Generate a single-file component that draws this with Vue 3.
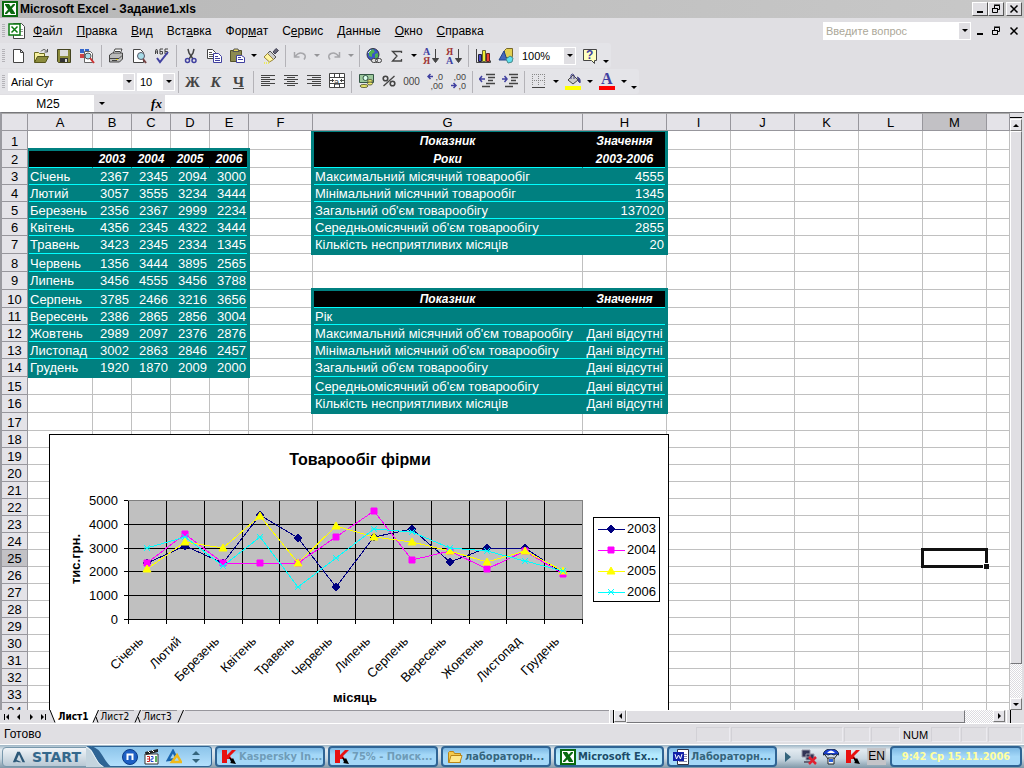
<script setup>
import { ref } from 'vue'

/* ---------- menu and toolbars ---------- */
const menu = [
  ['', 'Ф', 'айл'], ['', 'П', 'равка'], ['', 'В', 'ид'], ['Вст', 'а', 'вка'], ['Фор', 'м', 'ат'],
  ['С', 'е', 'рвис'], ['', 'Д', 'анные'], ['', 'О', 'кно'], ['', 'С', 'правка']
]

const icons = {
  new: '<path d="M3.500 1.500h7l3 3v10h-10zM10.500 1.500v3h3" fill="#fff" stroke="#444"/>',
  open: '<path d="M1.500 14V4.500h4l1 1h5v3" fill="#f6f0a0" stroke="#6b6b20"/><path d="M1.500 14.500l3-6h11l-3 6z" fill="#8c8c3c" stroke="#55551c"/><path d="M8 3.500q3-4 6 0M14.500 1v3h-3" fill="none" stroke="#555"/>',
  save: '<path d="M1.500 1.500h13v13h-12l-1-1z" fill="#8a8a3a" stroke="#444420"/><path d="M4 2h8v6H4z" fill="#ddd"/><path d="M4 10h8v4H4z" fill="#333"/><path d="M9 11h2v3H9z" fill="#ddd"/>',
  search: '<path d="M1 1h4v4H1zM6 1h4v3H6z" fill="#36c"/><path d="M1 6h4v4H1z" fill="#c44"/><path d="M5.500 3.500h6l2 2v9h-8z" fill="#fff" stroke="#666"/><circle cx="9" cy="8" r="3" fill="#a8dce8" stroke="#555"/><path d="M11 10l4 5" stroke="#c33" stroke-width="2"/>',
  print: '<path d="M5 6l2-5h7l-2 5" fill="#fff" stroke="#444"/><path d="M1.500 7l3-2h10v6l-3 3h-10z" fill="#bbb" stroke="#444"/><path d="M2 10.500h9l3-3M4 12.500h5M7 3.500h5" stroke="#444" fill="none"/><path d="M8 11h2v1H8z" fill="#e6d820"/>',
  preview: '<path d="M2.500 1.500h7l3 3v10h-10z" fill="#fff" stroke="#444"/><circle cx="10" cy="8" r="3.500" fill="#a8dce8" stroke="#556"/><path d="M12 11l3 4" stroke="#744" stroke-width="2"/>',
  spell: '<path d="M1.500 6V3l1-2 1 2v3M1.500 4h2M9 1H6v5h2.500V3.500H6M14 1h-3v5h2.500V3.500H11" fill="none" stroke="#444"/><path d="M3 10l3 4 8-10" fill="none" stroke="#4040a0" stroke-width="2"/>',
  cut: '<path d="M5 1l1 4 4 6M11 1l-1 4-4 6" fill="none" stroke="#444" stroke-width="1.500"/><circle cx="4.500" cy="12.500" r="2" fill="none" stroke="#4040a0" stroke-width="1.500"/><circle cx="11" cy="12.500" r="2" fill="none" stroke="#4040a0" stroke-width="1.500"/>',
  copy: '<path d="M1.500 1.500h5l3 3v6h-8z" fill="#fff" stroke="#444"/><path d="M3 4.500h3M3 6.500h4M3 8.500h4" stroke="#555"/><path d="M7.500 5.500h5l3 3v6h-8z" fill="#fff" stroke="#4040a0"/><path d="M9 8.500h3M9 10.500h5M9 12.500h5" stroke="#4040a0"/>',
  paste: '<path d="M1.500 2.500h11v11h-11z" fill="#8c8a50" stroke="#55532a"/><path d="M4 3.500L5 1h4l1 2.500z" fill="#e8d860" stroke="#555"/><path d="M7.500 7.500h5l3 2v5h-8z" fill="#fff" stroke="#4040a0"/><path d="M9 9.500h3M9 11.500h5" stroke="#4040a0"/>',
  brush: '<path d="M10 4l3-3.500 2.500 2L12 6z" fill="#667" stroke="#445"/><path d="M7 3l6 6-2.500 2.500-6-6z" fill="#ccc" stroke="#555"/><path d="M4.500 5.500l6 6-4 2.500L1 9z" fill="#fff6a0" stroke="#99853a"/><path d="M1 15h6" stroke="#ee3" stroke-width="1.500" stroke-dasharray="1 1"/>',
  undo: '<path d="M2.500 4v5h5M3 8.500q4-5 8-3t1 6" fill="none" stroke="#a6a6aa" stroke-width="1.500"/>',
  redo: '<path d="M13.500 4v5h-5M13 8.500q-4-5-8-3t-1 6" fill="none" stroke="#a6a6aa" stroke-width="1.500"/>',
  link: '<circle cx="7" cy="6.500" r="6" fill="#3a54c8" stroke="#334"/><path d="M3 3l4-2 2 3-3 2v3l-3-1zM9 6l3-1v4l-3 2z" fill="#4fb050"/><path d="M2 5l3-3" stroke="#cdf"/><rect x="5.500" y="10.500" width="6" height="4" rx="2" fill="#ddd" stroke="#444"/><rect x="9.500" y="10.500" width="6" height="4" rx="2" fill="none" stroke="#444"/>',
  sum: '<path d="M12.500 5V3.500h-9l4.500 4.500-4.500 5h9V11" fill="none" stroke="#444" stroke-width="1.300"/>',
  az: '<path d="M12.500 1v13M9.500 10.500l3 4 3-4z" stroke="#444" fill="#444"/>',
  chart: '<path d="M1.500 1v13.500h14v-2" fill="none" stroke="#444"/><path d="M3.500 6.500h3v7h-3z" fill="#44c" stroke="#223"/><path d="M7.500 2.500h3v11h-3z" fill="#ee3" stroke="#663"/><path d="M11.500 5.500h3v8h-3z" fill="#e43" stroke="#622"/>',
  draw: '<path d="M6.500 2.500l2-2h6v8l-2 1h-6z" fill="#e2cf50" stroke="#77682a"/><path d="M1 12l5-9 3 9z" fill="#46b" stroke="#248"/><path d="M8 11l4-3 3 2-1 4-4 1z" fill="#5fe0ee" stroke="#488"/>',
  help: '<path d="M1.500 1.500h13v11h-2v3l-3-3h-8z" fill="#ffffc0" stroke="#444"/>',
  left: '<path d="M1 2.500h14M1 4.500h9M1 6.500h14M1 8.500h9M1 10.500h14M1 12.500h9" stroke="#444"/>',
  center: '<path d="M1 2.500h14M4 4.500h8M1 6.500h14M4 8.500h8M1 10.500h14M4 12.500h8" stroke="#444"/>',
  right: '<path d="M1 2.500h14M6 4.500h9M1 6.500h14M6 8.500h9M1 10.500h14M6 12.500h9" stroke="#444"/>',
  merge: '<path d="M.5.5h15v14H.5zM.5 4.500h15M.5 10.500h15M5.500.5v4M10.500.5v4M5.500 10.500v4M10.500 10.500v4" fill="#fff" stroke="#444"/><path d="M1 7.500h4M11 7.500h4M3.500 6v3M12.500 6v3" stroke="#444"/>',
  money: '<path d="M1.500 1.500h14v8h-14z" fill="#9cc89c" stroke="#354"/><circle cx="7.500" cy="5" r="2.500" fill="#dfe" stroke="#354"/><ellipse cx="12" cy="8" rx="2.500" ry="1.500" fill="#ee6" stroke="#664"/><ellipse cx="12" cy="10.500" rx="2.500" ry="1.500" fill="#ee6" stroke="#664"/><ellipse cx="6" cy="13" rx="4" ry="1.500" fill="#ee6" stroke="#664"/>',
  percent: '<circle cx="4.500" cy="5.500" r="2.300" fill="none" stroke="#444" stroke-width="1.600"/><circle cx="11.500" cy="10.500" r="2.300" fill="none" stroke="#444" stroke-width="1.600"/><path d="M13.500 3l-11 10" stroke="#444" stroke-width="1.300"/>',
  incDec: '<path d="M1 3.500h5M3.500 1L1 3.500 3.500 6" stroke="#4040a0" fill="none" stroke-width="1.500"/>',
  decDec: '<path d="M1 12.500h5M3.500 10L6 12.500 3.500 15" stroke="#4040a0" fill="none" stroke-width="1.500"/>',
  outdent: '<path d="M7 1.500h9M9 4.500h7M9 7.500h5M7 10.500h9M3 13.500h8" stroke="#444" stroke-width="1.500"/><path d="M0 6h6M3 3L.5 6 3 9" stroke="#4040a0" fill="none" stroke-width="1.500"/>',
  indent: '<path d="M7 1.500h9M9 4.500h7M9 7.500h5M7 10.500h9M3 13.500h8" stroke="#444" stroke-width="1.500"/><path d="M0 6h5M2.500 3L5 6 2.500 9" stroke="#4040a0" fill="none" stroke-width="1.500"/>',
  borders: '<path d="M1.500 1v12M7.500 1v12M13.500 1v12M1 1.500h13M1 7.500h13" stroke="#888" stroke-dasharray="1 1"/><path d="M1 14.500h13" stroke="#444"/>',
  fill: '<path d="M8 2l5 5-5 4-5-4z" fill="#ccc" stroke="#444"/><path d="M6 6V2q1-2 3 0v4" fill="none" stroke="#448"/><path d="M12 4q4 1 3 6l-2-2" fill="#448" stroke="#448"/><path d="M0 13h16v4H0z" fill="#ff0"/>',
  font: '<path d="M0 13h16v4H0z" fill="red"/>'
}

const standardA = [
  ['new', 'Создать'], ['open', 'Открыть'], ['save', 'Сохранить'], ['search', 'Найти'], '|',
  ['print', 'Печать'], ['preview', 'Просмотр'], ['spell', 'Орфография'], '|',
  ['cut', 'Вырезать'], ['copy', 'Копировать'], ['paste', 'Вставить'], 'v', ['brush', 'Формат по образцу'], '|',
  ['undo', 'Отменить'], 'vd', ['redo', 'Вернуть'], 'vd', '|',
  ['link', 'Гиперссылка'], ['sum', 'Автосумма'], 'v',
  ['az', 'По возрастанию', 'А', 'Я'], ['az', 'По убыванию', 'Я', 'А'], '|',
  ['chart', 'Мастер диаграмм'], ['draw', 'Рисование']
]
const formatting = [
  ['left', 'По левому краю'], ['center', 'По центру'], ['right', 'По правому краю'], ['merge', 'Объединить'], '|',
  ['money', 'Денежный формат'], ['percent', 'Процентный формат'], ['zeros', 'Формат с разделителями'],
  ['incDec', 'Увеличить разрядность'], ['decDec', 'Уменьшить разрядность'], '|',
  ['outdent', 'Уменьшить отступ'], ['indent', 'Увеличить отступ'], '|',
  ['borders', 'Границы'], 'v', ['fill', 'Цвет заливки'], 'v', ['font', 'Цвет шрифта'], 'v'
]

/* ---------- worksheet ---------- */
const columns = [
  ['A', 65], ['B', 39], ['C', 39], ['D', 39], ['E', 39], ['F', 64], ['G', 270], ['H', 84],
  ['I', 64], ['J', 64], ['K', 64], ['L', 64], ['M', 64], ['', 0]
]
const tall = { 1: 19, 2: 18, 7: 18, 8: 18, 9: 18, 10: 18, 14: 18, 15: 18, 16: 18, 17: 18 }
const rowHeight = r => tall[r] || 17
const raisedRows = [7, 9, 14, 16]

const years = [2003, 2004, 2005, 2006]
const sales = [
  ['Січень', 2367, 2345, 2094, 3000], ['Лютий', 3057, 3555, 3234, 3444], ['Березень', 2356, 2367, 2999, 2234],
  ['Квітень', 4356, 2345, 4322, 3444], ['Травень', 3423, 2345, 2334, 1345], ['Червень', 1356, 3444, 3895, 2565],
  ['Липень', 3456, 4555, 3456, 3788], ['Серпень', 3785, 2466, 3216, 3656], ['Вересень', 2386, 2865, 2856, 3004],
  ['Жовтень', 2989, 2097, 2376, 2876], ['Листопад', 3002, 2863, 2846, 2457], ['Грудень', 1920, 1870, 2009, 2000]
]
const none = 'Дані відсутні'
const summary = {
  1: ['Показник', 'Значення'], 2: ['Роки', '2003-2006'],
  3: ['Максимальний місячний товарообіг', 4555], 4: ['Мінімальний місячний товарообіг', 1345],
  5: ["Загальний об'єм товарообігу", 137020], 6: ["Середньомісячний об'єм товарообігу", 2855],
  7: ['Кількість несприятливих місяців', 20],
  10: ['Показник', 'Значення'], 11: ['Рік', ''],
  12: ["Максимальний місячний об'єм товарообігу", none], 13: ["Мінімальний місячний об'єм товарообігу", none],
  14: ["Загальний об'єм товарообігу", none], 15: ["Середньомісячний об'єм товарообігу", none],
  16: ['Кількість несприятливих місяців', none]
}
function cell(r, c) {
  if (c < 5 && r >= 2 && r <= 14) {
    if (r === 2) return { text: c ? years[c - 1] : '', cls: 'head' }
    return { text: sales[r - 3][c], cls: c ? 'body num' : 'body' }
  }
  if ((c === 6 || c === 7) && summary[r]) {
    const text = summary[r][c - 6]
    if (r <= 2 || r === 10) return { text, cls: r === 1 ? 'head joined' : 'head' }
    return { text, cls: typeof text === 'number' ? 'body num' : c === 7 ? 'body mid' : 'body' }
  }
  return { text: '', cls: '' }
}

/* ---------- chart ---------- */
const plot = { x: 79, y: 66, w: 454, h: 119 }
const colors = ['#000080', '#ff00ff', '#ffff00', '#00ffff']
const px = i => Math.round(plot.x + (i + 0.5) * plot.w / 12)
const py = v => Math.round(plot.y + plot.h - v * plot.h / 5000)
const series = years.map((year, s) => ({
  year, color: colors[s], pts: sales.map((row, i) => [px(i), py(row[s + 1])])
}))
const marks = [
  'M0-4L4 0 0 4-4 0z', 'M-3-3H3V3H-3z', 'M0-4L4 3H-4z', 'M-3-3L3 3M3-3L-3 3M-3 0H3'
]

/* ---------- tabs and taskbar ---------- */
const sheets = ['Лист1', 'Лист2', 'Лист3']
const tasks = [
  ['kav', 'Kaspersky In...', 'dim'], ['kav', '75% - Поиск...', 'dim'], ['folder', 'лабораторн...', ''],
  ['excel', 'Microsoft Ex...', 'active'], ['word', 'Лабораторн...', '']
]
const taskIcons = {
  kav: '<path d="M1 1h5v5l5-5h4l-6 6 2 3H6v4H1z" fill="#e81010"/><path d="M8 8l3 2 1-1 3 6-6-1 1-1z" fill="#000"/>',
  folder: '<path d="M1.500 13.500v-10l1-1h4l1 2h6v9z" fill="#f4c94c" stroke="#b98518"/><path d="M2 13.500l2-7h11l-2 7z" fill="#ffe88c" stroke="#b98518"/>',
  excel: '<path d="M0 0h16v16H0z" fill="#0a6a10"/><path d="M2 2h12v12H2z" fill="#fff"/><path d="M3 3h4l6 9v1H9L3 4z" fill="#0a6a10"/><path d="M13 3h-2L3 12v1h2l8-9z" fill="#0a6a10"/>',
  word: '<path d="M4.500.5h11v15h-11z" fill="#fff" stroke="#334"/><path d="M11 5.500h3M11 7.500h3M11 9.500h3M6 12.500h8" stroke="#88a"/><path d="M0 3h11v9H0z" fill="#1220a8"/><path d="M2 5l1.500 5L5.500 6l2 4L9 5" fill="none" stroke="#fff"/>'
}
const question = ref('')
const nameBox = ref('M25')
const formula = ref('')
</script>

<template>
  <div class="app">
    <header class="title">
      <svg class="ico" viewBox="0 0 16 16" v-html="taskIcons.excel"></svg>
      <h1>Microsoft Excel - Задание1.xls</h1>
      <div class="win">
        <button aria-label="Свернуть"><svg viewBox="0 0 12 10"><path d="M3 8h6" stroke="#000" stroke-width="2" /></svg></button>
        <button aria-label="Восстановить"><svg viewBox="0 0 12 10"><path d="M4.500 4V1.500h5v4H8M2.500 4.500h5v4h-5zM4 1h6M2 4.500h6" fill="none" stroke="#000" /></svg></button>
        <button class="last" aria-label="Закрыть"><svg viewBox="0 0 12 10"><path d="M2.500 1.500l7 7M9.500 1.500l-7 7" stroke="#000" stroke-width="1.500" /></svg></button>
      </div>
    </header>

    <nav class="menubar">
      <span class="grip"></span>
      <svg class="doc" viewBox="0 0 18 16"><path d="M5.500.5h8l3 3v12h-11z" fill="#fff" stroke="#444" /><path d="M12 6.500h3M12 8.500h3M7 12.500h8" stroke="#999" /><path d="M1 1h11v11H1z" fill="#fff" stroke="#0a7a10" stroke-width="1.500" /><path d="M3.500 3.500l6 6M9.500 3.500l-6 6" stroke="#0a7a10" stroke-width="1.500" /></svg>
      <button v-for="m in menu" :key="m[2]" class="menu">{{ m[0] }}<u>{{ m[1] }}</u>{{ m[2] }}</button>
      <div class="ask">
        <input v-model="question" aria-label="Введите вопрос" placeholder="Введите вопрос">
        <button aria-label="Список вопросов"><i class="tri"></i></button>
      </div>
      <div class="win flat">
        <button aria-label="Свернуть книгу"><svg viewBox="0 0 12 10"><path d="M3 8h6" stroke="#000" stroke-width="2" /></svg></button>
        <button aria-label="Восстановить книгу"><svg viewBox="0 0 12 10"><path d="M4.500 4V1.500h5v4H8M2.500 4.500h5v4h-5zM4 1h6M2 4.500h6" fill="none" stroke="#000" /></svg></button>
        <button class="last" aria-label="Закрыть книгу"><svg viewBox="0 0 12 10"><path d="M2.500 1.500l7 7M9.500 1.500l-7 7" stroke="#000" stroke-width="1.500" /></svg></button>
      </div>
    </nav>

    <div class="toolbar">
      <span class="grip"></span>
      <template v-for="(t, i) in standardA" :key="i">
        <span v-if="t === '|'" class="sep"></span>
        <button v-else-if="t[0] === 'v'" class="drop" :class="{ off: t === 'vd' }" aria-label="Список"><i class="tri"></i></button>
        <button v-else class="tool" :aria-label="t[1]">
          <svg class="ico" viewBox="0 0 16 16" v-html="icons[t[0]]"></svg>
          <span v-if="t[2]" class="sort" :class="{ rev: t[2] === 'Я' }"><b>{{ t[2] }}</b><b>{{ t[3] }}</b></span>
        </button>
      </template>
      <span class="combo zoom"><select aria-label="Масштаб"><option>100%</option></select><i class="arrowbox"><i class="tri"></i></i></span>
      <button class="tool" aria-label="Справка"><svg class="ico" viewBox="0 0 16 16" v-html="icons.help"></svg><b class="q">?</b></button>
      <button class="more" aria-label="Параметры панели"><i class="tri"></i></button>
    </div>

    <div class="toolbar">
      <span class="grip"></span>
      <span class="combo face"><select aria-label="Шрифт"><option>Arial Cyr</option></select><i class="arrowbox"><i class="tri"></i></i></span>
      <span class="combo size"><select aria-label="Размер"><option>10</option></select><i class="arrowbox"><i class="tri"></i></i></span>
      <span class="sep"></span>
      <button class="tool letter">Ж</button>
      <button class="tool letter it">К</button>
      <button class="tool letter un">Ч</button>
      <span class="sep"></span>
      <template v-for="(t, i) in formatting" :key="i">
        <span v-if="t === '|'" class="sep"></span>
        <button v-else-if="t === 'v'" class="drop" aria-label="Список"><i class="tri"></i></button>
        <button v-else class="tool" :aria-label="t[1]">
          <span v-if="t[0] === 'zeros'" class="zeros">000</span>
          <svg v-else class="ico tallico" viewBox="0 0 16 17" v-html="icons[t[0]]"></svg>
          <span v-if="t[0] === 'merge'" class="over a">a</span>
          <span v-if="t[0] === 'incDec'" class="over dec"><span>,0</span><span>,00</span></span>
          <span v-if="t[0] === 'decDec'" class="over dec"><span>,00</span><span>,0</span></span>
          <b v-if="t[0] === 'font'" class="over bigA">A</b>
        </button>
      </template>
      <button class="more" aria-label="Параметры панели"><i class="tri"></i></button>
    </div>

    <div class="formula">
      <input v-model="nameBox" class="name" aria-label="Имя">
      <button class="namedrop" aria-label="Список имён"><i class="tri"></i></button>
      <button class="fx" aria-label="Вставка функции">fx</button>
      <input v-model="formula" class="fbar" aria-label="Строка формул">
    </div>

    <main class="book">
      <div class="view">
        <table>
          <colgroup>
            <col class="rowcol">
            <col v-for="c in columns" :key="c[0]" :style="c[1] ? { width: c[1] + 'px' } : null">
          </colgroup>
          <thead>
            <tr>
              <th></th>
              <th v-for="c in columns" :key="c[0]" :class="{ sel: c[0] === 'M' }">{{ c[0] }}</th>
            </tr>
          </thead>
          <tbody>
            <tr v-for="r in 34" :key="r" :class="{ raised: raisedRows.includes(r) }">
              <th :class="{ sel: r === 25 }" :style="{ height: rowHeight(r) + 'px' }">{{ r }}</th>
              <td v-for="(c, i) in columns" :key="i" :class="cell(r, i).cls">{{ cell(r, i).text }}</td>
            </tr>
          </tbody>
        </table>
        <div class="range one"></div>
        <div class="range two"></div>
        <div class="range three"></div>
        <div class="cursor"></div>

        <svg class="chart" width="620" height="300" viewBox="0 0 620 300" role="img" aria-label="Товарообіг фірми">
          <rect x=".5" y=".5" width="619" height="310" fill="#fff" stroke="#000" />
          <text class="ctitle" x="311" y="31" text-anchor="middle">Товарообіг фірми</text>
          <g shape-rendering="crispEdges">
            <rect :x="plot.x" :y="plot.y" :width="plot.w" :height="plot.h" fill="#c0c0c0" stroke="#808080" />
            <path v-for="k in 13" :key="k" :d="`M${Math.round(plot.x + (k - 1) * plot.w / 12) + 0.5} ${k === 13 ? plot.y + plot.h : plot.y + 1}V${plot.y + plot.h + 5}`" stroke="#000" />
            <path v-for="k in 6" :key="k" :d="`M${plot.x - 4} ${py((k - 1) * 1000) + 0.5}H${k === 6 ? plot.x : plot.x + plot.w}`" stroke="#000" />
          </g>
          <text v-for="k in 6" :key="k" class="lab" :x="69" :y="py((k - 1) * 1000) + 5" text-anchor="end">{{ (k - 1) * 1000 }}</text>
          <text v-for="(row, i) in sales" :key="row[0]" class="lab" text-anchor="end" :transform="`translate(${px(i) - 3} 208) rotate(-45)`">{{ row[0] }}</text>
          <text class="axis" text-anchor="middle" transform="translate(31 125) rotate(-90)">тис.грн.</text>
          <text class="axis" x="306" y="268" text-anchor="middle">місяць</text>
          <g v-for="(s, n) in series" :key="s.year" :stroke="s.color">
            <polyline :points="s.pts.join(' ')" fill="none" shape-rendering="crispEdges" />
            <path v-for="(p, i) in s.pts" :key="i" :d="marks[n]" :fill="s.color" :transform="`translate(${p})`" />
          </g>
          <rect x="544.5" y="83.5" width="66" height="84" fill="#fff" stroke="#000" />
          <g v-for="(s, n) in series" :key="s.year">
            <path :d="`M549 ${95.5 + n * 21}h27`" :stroke="s.color" shape-rendering="crispEdges" />
            <path :d="marks[n]" :fill="s.color" :stroke="s.color" :transform="`translate(562 ${95 + n * 21})`" />
            <text class="lab" x="578" :y="99 + n * 21">{{ s.year }}</text>
          </g>
        </svg>
      </div>
      <div class="vscroll">
        <span class="split"></span>
        <button class="sb" aria-label="Вверх"><i class="tri up"></i></button>
        <span class="thumb"></span>
        <span class="track"></span>
        <button class="sb" aria-label="Вниз"><i class="tri"></i></button>
      </div>
    </main>

    <div class="tabs">
      <button class="nav" aria-label="Первый лист"><svg viewBox="0 0 8 8"><path d="M1.500 1v6" stroke="#000" /><path d="M6 1v6L3 4z" /></svg></button>
      <button class="nav" aria-label="Предыдущий лист"><svg viewBox="0 0 8 8"><path d="M5 1v6L2 4z" /></svg></button>
      <button class="nav" aria-label="Следующий лист"><svg viewBox="0 0 8 8"><path d="M3 1v6l3-3z" /></svg></button>
      <button class="nav" aria-label="Последний лист"><svg viewBox="0 0 8 8"><path d="M6.500 1v6" stroke="#000" /><path d="M2 1v6l3-3z" /></svg></button>
      <template v-for="(s, i) in sheets" :key="s">
        <svg class="slant" viewBox="0 0 8 13"><path v-if="i === 0" d="M1 0h7v13H6z" fill="#fff" /><path v-if="i === 1" d="M0 0h6L1 12l-1 1z" fill="#fff" /><path v-if="i" d="M6.500 0L1 12.500M4 7l2 5.500" stroke="#000" fill="none" /><path v-else d="M1 0l5 12.500" stroke="#000" fill="none" /></svg>
        <button class="tab" :class="{ on: i === 0 }">{{ s }}</button>
      </template>
      <svg class="slant" viewBox="0 0 8 13"><path d="M6.500 0L1 12.500" stroke="#000" fill="none" /></svg>
      <span class="rest"></span>
      <span class="hsplit"></span>
      <div class="hscroll">
        <button class="sb" aria-label="Влево"><i class="tri lt"></i></button>
        <span class="thumb"></span>
        <span class="track"></span>
        <button class="sb" aria-label="Вправо"><i class="tri rt"></i></button>
      </div>
      <span class="hsplit end"></span>
    </div>

    <footer class="status">
      <span class="ready">Готово</span>
      <span class="p p1"></span><span class="p p2"></span><span class="p p3"></span><span class="p p4"></span>
      <span class="p p4 num">NUM</span><span class="p p4"></span><span class="p p3"></span><span class="p p1"></span>
    </footer>

    <div class="taskbar">
      <button class="start">
        <svg viewBox="0 0 16 16"><path d="M1 14L6 2h3l6 12h-3L8 5 4 14z" fill="#2c5878" /><path d="M5 11l6 3H8l-4-1z" fill="#2c5878" /></svg>
        START
      </button>
      <div class="quick">
        <svg class="swoop" viewBox="0 0 34 21" preserveAspectRatio="none"><path d="M0 0h3q6 2 11 10t10 11H0z" fill="#c4d4de" /><path d="M0 0h6q8 2 13 10t10 11H20Q14 18 10 10T0 0z" fill="#2f6494" /><path d="M0 1q6 2 10 10t10 10" fill="none" stroke="#e6f2f8" /></svg>
        <svg class="ico" viewBox="0 0 16 16"><circle cx="8" cy="8" r="7.500" fill="#1d5fc4" stroke="#0c3c88" /><path d="M5.500 11V5.500h5V11" fill="none" stroke="#fff" stroke-width="2" /></svg>
        <svg class="ico" viewBox="0 0 16 16"><path d="M1 5h13v10H1z" fill="#fff" stroke="#333" /><path d="M1 3l13-3v3L2 6z" fill="#222" /><path d="M4 2l2 2M8 1l2 2" stroke="#fff" /><path d="M3 7.500h2.500v5H3M3 10h2" fill="none" stroke="#c22" /><path d="M7 7.500h2V10H7v2.500h2.500" fill="none" stroke="#24c" /><path d="M12 7v6" stroke="#292" stroke-width="1.500" /></svg>
        <svg class="ico" viewBox="0 0 16 16"><path d="M2 11L7 2l4 8z" fill="none" stroke="#1a66b0" stroke-width="2.500" /><path d="M6 13l5-7 4 7z" fill="#a4d8f8" stroke="#f0b818" stroke-width="2.500" /></svg>
        <svg class="ico" viewBox="0 0 16 16"><path d="M8 2l4 4H4zM8 14l4-4H4z" fill="#34647c" /></svg>
      </div>
      <button v-for="t in tasks" :key="t[1]" class="task" :class="t[2]">
        <svg class="ico" viewBox="0 0 16 16" v-html="taskIcons[t[0]]"></svg>{{ t[1] }}
      </button>
      <div class="tray">
        <svg class="arrow" viewBox="0 0 8 12"><path d="M1 1l6 5-6 5z" fill="#34647c" /></svg>
        <svg class="ico" viewBox="0 0 16 16"><path d="M1 1h8v7H1zM5 5h8v6H5z" fill="#335" stroke="#99a" /><path d="M3 13h6" stroke="#667" stroke-width="2" /><path d="M8 8l7 7M15 8l-7 7" stroke="#e02030" stroke-width="2.500" /></svg>
        <svg class="ico" viewBox="0 0 16 16"><path d="M0 6q1-6 8-6t8 6l-3-1-2 1-3-1-3 1-2-1z" fill="#1a40d8" stroke="#124" /><path d="M4 4q4-5 8 0" fill="#fff" /><path d="M2 6l4 5M14 6l-4 5" stroke="#222" /><path d="M5 9h6v6H5z" fill="#fff" stroke="#222" /><path d="M6 10h4v3H6z" fill="#2a60e0" /></svg>
        <svg class="ico" viewBox="0 0 16 16" v-html="taskIcons.kav"></svg>
        <span class="lang">EN</span>
      </div>
      <time class="clock">9:42 Ср 15.11.2006</time>
    </div>
  </div>
</template>

<style>
html, body { margin: 0; height: 100%; overflow: hidden; }
</style>

<style scoped>
.app {
  display: flex; flex-direction: column; height: 100vh; min-width: 0; overflow: hidden;
  background: #e0dfe3; color: #000; font: 12px/14px "Liberation Sans", Arial, sans-serif;
}
button, input, select { font: inherit; color: inherit; margin: 0; padding: 0; border: 0; border-radius: 0; background: none; appearance: none; outline: 0; min-width: 0; }
button { display: flex; align-items: center; justify-content: center; flex: none; white-space: nowrap; }
.ico { width: 16px; height: 16px; flex: none; display: block; }
.tri { width: 0; height: 0; border: 3px solid transparent; border-top-color: #000; border-bottom: 0; display: block; }
.tri.up { border: 3px solid transparent; border-bottom-color: #000; border-top: 0; }
.tri.lt { border: 3px solid transparent; border-right-color: #000; border-left: 0; }
.tri.rt { border: 3px solid transparent; border-left-color: #000; border-right: 0; }

.title { flex: none; display: flex; align-items: center; height: 18px; padding: 0 2px; background: linear-gradient(90deg, #b8b8b8, #c8c8c8); }
.title h1 { flex: 1; margin: 0 0 0 2px; font-size: 12px; line-height: 16px; font-weight: bold; }
.win { display: flex; flex: none; }
.win button { width: 16px; height: 14px; background: #e0dfe3; border: 1px solid; border-color: #fff #555 #555 #fff; }
.win svg { width: 12px; height: 10px; }
.win .last { margin-left: 2px; }
.win.flat button { background: none; border-color: transparent; }

.menubar { flex: none; display: flex; align-items: center; height: 25px; padding-right: 2px; }
.grip { flex: none; width: 3px; height: 14px; margin: 0 1px 0 2px; background: repeating-linear-gradient(#b4b3b8 0 1px, transparent 1px 2px); }
.doc { width: 18px; height: 16px; margin: 0 0 0 2px; }
.menu { padding: 0 7px; height: 20px; }
.ask { display: flex; width: 148px; height: 18px; margin-left: auto; background: #fff; flex: none; }
.ask input { flex: 1; padding-left: 3px; font-size: 11px; }
.ask input::placeholder { color: #aca899; opacity: 1; }
.ask button { width: 11px; margin: 1px; background: #e0dfe3; }
.win.flat { margin-left: 1px; }

.toolbar { flex: none; align-self: flex-start; display: flex; align-items: center; height: 25px; margin-bottom: 1px; background: #e4e4e8; border-radius: 0 3px 3px 0; }
.toolbar + .toolbar { margin-bottom: 0; }
.tool { position: relative; width: 23px; height: 22px; }
.tallico { height: 17px; }
.drop { width: 11px; height: 22px; }
.drop.off { opacity: .35; }
.sep { flex: none; width: 6px; height: 22px; background: linear-gradient(#b4b3b8, #b4b3b8) 3px 0 / 1px 100% no-repeat; }
.more { width: 10px; height: 22px; align-items: flex-end; padding-bottom: 4px; }
.sort { position: absolute; left: 4px; top: 2px; display: flex; flex-direction: column; font: bold 10px/9px "Liberation Serif", serif; color: #4040a0; }
.sort b + b { color: #a03838; }
.sort.rev { color: #a03838; }
.sort.rev b + b { color: #4040a0; }
.q { position: absolute; left: 8px; top: 3px; color: #4040a0; font-size: 12px; }
.combo { position: relative; display: flex; flex: none; height: 18px; background: #fff; }
.combo select { flex: 1; width: 100%; padding: 0 12px 0 3px; font-size: 11px; }
.arrowbox { position: absolute; right: 1px; top: 1px; width: 11px; height: 16px; display: flex; align-items: center; justify-content: center; background: #e0dfe3; pointer-events: none; }
.zoom { width: 57px; margin: 0 2px; }
.face { width: 127px; margin: 0 2px; }
.size { width: 38px; }
.letter { font: bold 15px/18px "Liberation Serif", "Times New Roman", serif; color: #444; }
.it { font-style: italic; }
.un { text-decoration: underline; }
.zeros { font-size: 10px; color: #444; }
.over { position: absolute; color: #444; }
.over.a { left: 9px; top: 4px; font-size: 9px; }
.dec { right: 3px; top: 2px; display: flex; flex-direction: column; align-items: flex-end; font-size: 9px; line-height: 9px; }
.bigA { left: 6px; top: 0; color: #4040a0; font: bold 16px/16px "Liberation Serif", serif; }

.formula { flex: none; display: flex; height: 18px; border-top: 1px solid #e0dfe3; background: #fff; box-sizing: border-box; }
.name { width: 92px; margin-left: 2px; text-align: center; font-size: 12px; }
.namedrop { width: 15px; background: #e0dfe3; }
.fx { width: 56px; padding-left: 39px; background: #e0dfe3; font: italic bold 13px/16px "Liberation Serif", serif; box-sizing: border-box; }
.fbar { flex: 1; }

.book { flex: 1; min-height: 0; display: flex; border-top: 1px solid #77777b; border-left: 2px solid #9a9aa0; }
.view { position: relative; flex: 1; min-width: 0; overflow: hidden; background: #fff; }
table { width: 100%; table-layout: fixed; border-collapse: separate; border-spacing: 0; font-size: 13px; line-height: 15px; }
.rowcol { width: 26px; }
th { box-sizing: border-box; padding: 0; background: #e4e3e8; border-right: 1px solid #97969c; border-bottom: 1px solid #97969c; font-weight: normal; text-align: center; vertical-align: bottom; }
thead th { height: 18px; border-top: 1px solid #aaa; }
th.sel { background: #c2c1c5; }
td { box-sizing: border-box; padding: 0 2px; border-right: 1px solid #c0c0c0; border-bottom: 1px solid #c0c0c0; vertical-align: bottom; white-space: nowrap; overflow: hidden; }
.raised th, .raised td { padding-bottom: 1px; }
.head { background: #000; color: #fff; font-size: 12px; font-weight: bold; font-style: italic; text-align: center; border-color: #000 #000 #0ff #000; }
.joined { border-bottom-color: #000; }
.body { background: #008080; color: #fff; border-color: #008080 #008080 #0ff #008080; border-right: 0; padding-right: 3px; }
.num { text-align: right; }
.mid { text-align: center; }
.range { position: absolute; box-sizing: border-box; border: 3px solid #008080; }
.one { left: 26px; top: 35px; width: 222px; height: 230px; border-left-width: 1px; }
.two { left: 309px; top: 18px; width: 357px; height: 124px; border-top-width: 1px; }
.three { left: 309px; top: 175px; width: 357px; height: 126px; }
.cursor { position: absolute; left: 919px; top: 435px; width: 67px; height: 20px; box-sizing: border-box; border: 3px solid #111; }
.cursor::after { content: ""; position: absolute; right: -4px; bottom: -4px; width: 5px; height: 5px; background: #111; border: 1px solid #fff; border-width: 1px 0 0 1px; }
.chart { position: absolute; left: 47px; top: 321px; overflow: hidden; }
.chart text { font-family: "Liberation Sans", Arial, sans-serif; stroke: none; }
.lab { font-size: 13px; }
.ctitle { font-size: 16px; font-weight: bold; }
.axis { font-size: 13px; font-weight: bold; }

.vscroll { display: flex; flex-direction: column; flex: none; width: 12px; padding-right: 2px; }
.split { height: 4px; border-bottom: 1px solid #000; margin-bottom: 1px; }
.sb { width: 12px; height: 12px; box-sizing: border-box; background: #e4e3e8; border: 1px solid; border-color: #fff #777 #777 #fff; }
.thumb { background: #e0dfe3; border: 1px solid; border-color: #fff #77777b #77777b #fff; box-sizing: border-box; }
.track { background: repeating-conic-gradient(#fff 0 25%, #dcdbe0 0 50%) 0 0 / 2px 2px; }
.vscroll .thumb { flex: 535; }
.vscroll .track { flex: 34; }

.tabs { flex: none; display: flex; height: 13px; padding-left: 1px; border-bottom: 1px solid #fff; border-top: 0; font: 11px/12px "DejaVu Sans Condensed", "DejaVu Sans", sans-serif; }
.nav { width: 12px; }
.nav svg { width: 8px; height: 8px; }
.slant { width: 8px; height: 13px; flex: none; }
.tab { height: 13px; border-top: 1px solid #97969c; padding: 0 5px 0 1px; font-size: 10px; }
.tab.on { background: #fff; font-weight: bold; border-top-color: #fff; padding-right: 3px; }
.rest { flex: 430; border-top: 1px solid #97969c; }
.hsplit { flex: none; width: 3px; border-left: 1px solid #fff; border-right: 1px solid #000; }
.hscroll { flex: 396; display: flex; }
.hscroll .thumb { flex: 337; }
.hscroll .track { flex: 28; }
.hsplit.end { width: 3px; margin: 0 13px 0 1px; }

.status { flex: none; display: flex; align-items: center; height: 20px; padding: 0 2px 0 4px; gap: 1px; border-bottom: 1px solid #fff; }
.ready { flex: 1; }
.p { flex: none; height: 15px; border: 1px solid #d2d1d6; border-color: #d2d1d6 #ecebf0 #ecebf0 #d2d1d6; box-sizing: border-box; }
.p1 { width: 34px; } .p2 { width: 112px; } .p3 { width: 26px; } .p4 { width: 29px; }
.num.p { border: 0; text-align: left; text-indent: 2px; line-height: 16px; font-size: 11px; }

.taskbar { flex: none; display: flex; align-items: center; height: 23px; padding: 0 2px; box-sizing: border-box; background: linear-gradient(#9cb4c4, #e2eaf0 20%, #c8d6e0 60%, #8098a8); font: bold 11px/14px "DejaVu Sans Condensed", "DejaVu Sans", Verdana, sans-serif; }
.start { width: 89px; height: 20px; gap: 6px; border: 1px solid #7898ac; border-radius: 4px; background: linear-gradient(#f0f4f8, #b8c8d4); color: #34688c; box-sizing: border-box; font: bold 14px/18px "DejaVu Sans", Verdana, sans-serif; }
.start svg { width: 14px; height: 14px; }
.quick { position: relative; display: flex; align-items: center; justify-content: flex-end; gap: 6px; width: 120px; height: 21px; margin: 0 3px 0 1px; padding-right: 7px; box-sizing: border-box; background: linear-gradient(#8cc4ea, #b4e0fc); border: 1px solid #2f6494; border-left: 0; border-radius: 0 4px 4px 0; flex: none; }
.swoop { width: 30px; height: 21px; margin-right: auto; flex: none; }
.task { flex: 0 1 110px; height: 21px; margin-right: 3px; padding: 0 4px; gap: 2px; justify-content: flex-start; border: 2px solid #2f6494; border-radius: 4px; background: linear-gradient(#7cb8e4, #a4d8f8 40%); color: #34647c; box-sizing: border-box; overflow: hidden; }
.dim { color: #6f9cb8; }
.task.active { background: linear-gradient(#98d0ec, #b4eafe 40%); color: #1c4c68; }
.tray { flex: 1; display: flex; align-items: center; justify-content: flex-end; gap: 6px; margin-right: 4px; }
.arrow { width: 8px; height: 12px; margin-right: 3px; }
.lang { padding: 1px 1px; background: #c4c4c8; color: #000; font: 12px/15px "Liberation Sans", sans-serif; }
.clock { flex: none; width: 132px; height: 21px; line-height: 17px; text-align: center; color: #ffffa0; border: 2px solid #2f6494; border-radius: 4px; background: linear-gradient(#7cb8e4, #a4d8f8 50%); box-sizing: border-box; white-space: nowrap; }
</style>
